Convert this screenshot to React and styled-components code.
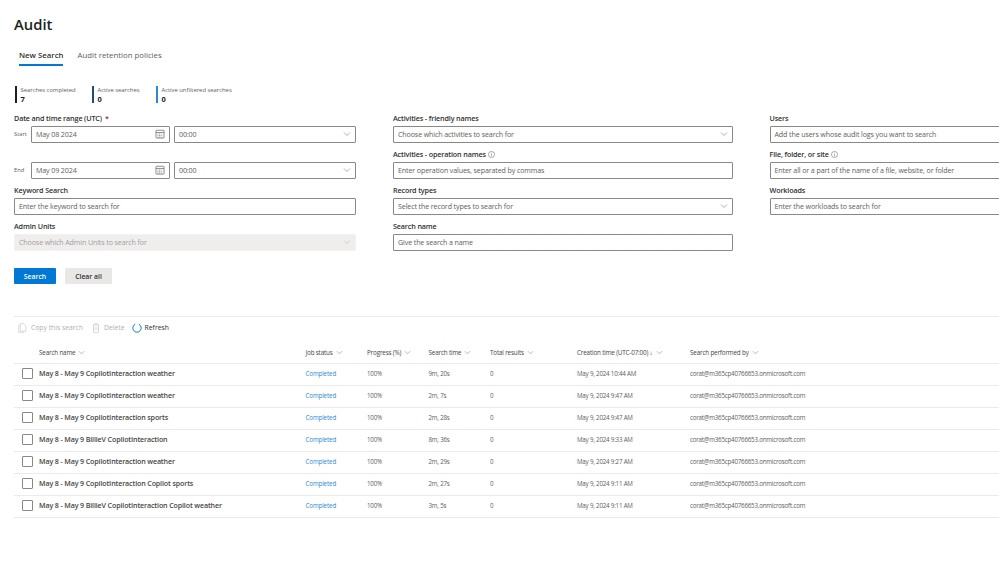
import React from 'react';
import styled, {createGlobalStyle} from 'styled-components';

const GlobalStyle = createGlobalStyle`
  html, body {
    margin: 0;
    width: 999px;
    height: 562px;
    overflow: hidden;
    background: #fff;
    font-family: "Open Sans", "Noto Sans", "Liberation Sans", sans-serif;
    color: #323130;
  }
`;

const Page = styled.div`
  width: 999px;
  height: 562px;
  overflow: hidden;
  padding: 14px 0 0 14px;
  box-sizing: border-box;
`;

const Title = styled.h1`
  margin: 0;
  height: 20px;
  font-size: 14.8px;
  line-height: 20px;
  font-weight: 600;
  color: #201f1e;
`;

const Tabs = styled.div`
  display: flex;
  gap: 14px;
  margin: 14px 0 0 5px;
`;

const Tab = styled.div`
  height: 16px;
  font-size: 7.8px;
  line-height: 14px;
  color: ${p => p.$active ? '#323130' : '#605e5c'};
  font-weight: ${p => p.$active ? 600 : 400};
  border-bottom: 2px solid ${p => p.$active ? '#0078d4' : 'transparent'};
`;

const Stats = styled.div`
  display: flex;
  margin: 20px 0 0 0.5px;
  height: 17px;
`;

const Stat = styled.div`
  width: ${p => p.$width}px;
  box-sizing: border-box;
  padding-left: 4px;
  border-left: 2px solid ${p => p.$color};
  display: flex;
  flex-direction: column;
`;

const StatLabel = styled.div`
  font-size: 5.9px;
  line-height: 8px;
  letter-spacing: -0.02px;
  color: #605e5c;
`;

const StatValue = styled.div`
  font-size: 7.5px;
  line-height: 10px;
  font-weight: 700;
  color: #201f1e;
`;

const FormGrid = styled.div`
  display: grid;
  grid-template-columns: 342px 339.5px 300px;
  column-gap: 37px;
  margin-top: 9px;
`;

const Column = styled.div`
  display: flex;
  flex-direction: column;
`;

const Field = styled.div`
  margin-bottom: 5px;
`;

const Label = styled.div`
  height: 14px;
  box-sizing: border-box;
  padding-bottom: 2px;
  display: flex;
  align-items: center;
  gap: 2px;
  font-size: 7.2px;
  letter-spacing: -0.14px;
  font-weight: 600;
  color: #323130;

  em {
    font-style: normal;
    color: #a4262c;
    margin-left: 1px;
  }
`;

const DateRow = styled.div`
  display: flex;
  align-items: center;
  margin-top: ${p => p.$top || 0}px;
  margin-bottom: ${p => p.$bottom || 0}px;
`;

const RowCaption = styled.div`
  width: 17px;
  box-sizing: border-box;
  padding-bottom: 2px;
  font-size: 5.8px;
  line-height: 10px;
  color: #605e5c;
`;

const Box = styled.div`
  height: 17px;
  box-sizing: border-box;
  display: flex;
  align-items: center;
  justify-content: space-between;
  padding: 0 4px 1px;
  border: 1px solid ${p => p.$disabled ? '#f3f2f1' : '#8a8886'};
  border-radius: 1px;
  background: ${p => p.$disabled ? '#efeeed' : '#fff'};
  color: ${p => p.$disabled ? '#a19f9d' : '#605e5c'};
  font-size: 7.1px;
  letter-spacing: -0.12px;
  white-space: nowrap;
  width: ${p => p.$width ? p.$width + 'px' : 'auto'};
  margin-left: ${p => p.$left || 0}px;
`;

const Buttons = styled.div`
  display: flex;
  gap: 9px;
  margin-top: 12px;
`;

const Button = styled.div`
  height: 16px;
  width: ${p => p.$width}px;
  display: flex;
  align-items: center;
  justify-content: center;
  font-size: 6.85px;
  font-weight: 600;
  background: ${p => p.$primary ? '#0078d4' : '#e9e8e7'};
  color: ${p => p.$primary ? '#fff' : '#323130'};
  border-radius: 1px;
`;

const Divider = styled.div`
  height: 1px;
  background: #edebe9;
  margin-top: 32px;
`;

const Toolbar = styled.div`
  display: flex;
  align-items: center;
  height: 21px;
  padding-left: 4px;
`;

const Action = styled.div`
  display: flex;
  align-items: center;
  gap: ${p => p.$gap || 4}px;
  margin-right: ${p => p.$right || 8}px;
  font-size: 6.8px;
  color: ${p => p.$disabled ? '#b3b0ad' : '#323130'};
`;

const Row = styled.div`
  display: grid;
  grid-template-columns: 25px 266.5px 61.5px 61.5px 61.5px 87px 113px 309px;
  align-items: center;
  height: 22px;
  box-sizing: border-box;
  padding-bottom: ${p => p.$head ? 0 : 2}px;
  margin-top: ${p => p.$head ? 4 : 0}px;
  border-bottom: 1px solid #edebe9;
`;

const HeadCell = styled.div`
  display: flex;
  align-items: center;
  gap: 3px;
  font-size: 6.3px;
  letter-spacing: -0.17px;
  font-weight: 500;
  color: #484644;
  white-space: nowrap;
`;

const Cell = styled.div`
  font-size: 6.2px;
  letter-spacing: -0.2px;
  color: #605e5c;
  white-space: nowrap;
`;

const NameCell = styled(Cell)`
  font-size: 7.1px;
  letter-spacing: -0.13px;
  font-weight: 600;
  color: #484644;
  padding-bottom: 1.5px;
`;

const StatusCell = styled(Cell)`
  color: #2b88d8;
  letter-spacing: -0.12px;
`;

const Check = styled.div`
  width: 9px;
  height: 9px;
  margin-left: 8px;
  border: 1px solid #8a8886;
  border-radius: 1px;
`;

const Chevron = ({size = 8, color = '#605e5c'}) => (
  <svg width={size} height={size} viewBox="0 0 16 16" fill="none" stroke={color} strokeWidth="1">
    <path d="M2 5l6 6 6-6"/>
  </svg>
);

const CalendarIcon = () => (
  <svg width="10" height="10" viewBox="0 0 16 16" fill="none" stroke="#605e5c" strokeWidth="1.1">
    <rect x="1.5" y="2" width="13" height="12.5" rx="1"/>
    <path d="M1.5 5.5h13"/>
    <path d="M4 8h8M4 10.5h8M4 13h8" strokeWidth="1" strokeDasharray="1.5 1"/>
  </svg>
);

const InfoIcon = () => (
  <svg width="7" height="7" viewBox="0 0 16 16" fill="none" stroke="#605e5c" strokeWidth="1.2">
    <circle cx="8" cy="8" r="7"/>
    <path d="M8 7v5M8 4v1.5"/>
  </svg>
);

const CopyIcon = () => (
  <svg width="9" height="10" viewBox="0 0 14 16" fill="none" stroke="#c8c6c4" strokeWidth="1">
    <path d="M1 3.5h2M1 3.5V15h8v-2"/>
    <path d="M3.5 1H9l3.5 3.5V13h-9z"/>
  </svg>
);

const TrashIcon = () => (
  <svg width="8" height="10" viewBox="0 0 12 16" fill="none" stroke="#c8c6c4" strokeWidth="1">
    <path d="M1 3h10M4 3V1h4v2M2 3v12h8V3M4.5 6v6M7.5 6v6"/>
  </svg>
);

const RefreshIcon = () => (
  <svg width="10" height="10" viewBox="0 0 16 16" fill="none" stroke="#0078d4" strokeWidth="1.5">
    <path d="M5.2 1.9A6.7 6.7 0 1 0 10.8 1.9"/>
  </svg>
);

const SelectBox = ({children, ...rest}) => (
  <Box {...rest}>
    <span>{children}</span>
    <Chevron color={rest.$disabled ? '#b3b0ad' : '#605e5c'}/>
  </Box>
);

const rows = [
  ['May 8 - May 9 CopilotInteraction weather', '9m, 20s', 'May 9, 2024 10:44 AM'],
  ['May 8 - May 9 CopilotInteraction weather', '2m, 7s', 'May 9, 2024 9:47 AM'],
  ['May 8 - May 9 CopilotInteraction sports', '2m, 28s', 'May 9, 2024 9:47 AM'],
  ['May 8 - May 9 BillieV CopilotInteraction', '8m, 36s', 'May 9, 2024 9:33 AM'],
  ['May 8 - May 9 CopilotInteraction weather', '2m, 29s', 'May 9, 2024 9:27 AM'],
  ['May 8 - May 9 CopilotInteraction Copilot sports', '2m, 27s', 'May 9, 2024 9:11 AM'],
  ['May 8 - May 9 BillieV CopilotInteraction Copilot weather', '3m, 5s', 'May 9, 2024 9:11 AM'],
];

const heads = ['Search name', 'Job status', 'Progress (%)', 'Search time', 'Total results'];

export default function App() {
  return (
    <Page>
      <GlobalStyle/>
      <Title>Audit</Title>
      <Tabs>
        <Tab $active>New Search</Tab>
        <Tab>Audit retention policies</Tab>
      </Tabs>

      <Stats>
        <Stat $width={77} $color="#201f1e">
          <StatLabel>Searches completed</StatLabel>
          <StatValue>7</StatValue>
        </Stat>
        <Stat $width={64} $color="#1f4e79">
          <StatLabel>Active searches</StatLabel>
          <StatValue>0</StatValue>
        </Stat>
        <Stat $width={100} $color="#2b88d8">
          <StatLabel>Active unfiltered searches</StatLabel>
          <StatValue>0</StatValue>
        </Stat>
      </Stats>

      <FormGrid>
        <Column>
          <Label>Date and time range (UTC) <em>*</em></Label>
          <DateRow>
            <RowCaption>Start</RowCaption>
            <Box $width={139}>May 08 2024 <CalendarIcon/></Box>
            <SelectBox $width={182} $left={4}>00:00</SelectBox>
          </DateRow>
          <DateRow $top={19} $bottom={5}>
            <RowCaption>End</RowCaption>
            <Box $width={139}>May 09 2024 <CalendarIcon/></Box>
            <SelectBox $width={182} $left={4}>00:00</SelectBox>
          </DateRow>
          <Field>
            <Label>Keyword Search</Label>
            <Box>Enter the keyword to search for</Box>
          </Field>
          <Field>
            <Label>Admin Units</Label>
            <SelectBox $disabled>Choose which Admin Units to search for</SelectBox>
          </Field>
          <Buttons>
            <Button $primary $width={42}>Search</Button>
            <Button $width={47}>Clear all</Button>
          </Buttons>
        </Column>

        <Column>
          <Field>
            <Label>Activities - friendly names</Label>
            <SelectBox>Choose which activities to search for</SelectBox>
          </Field>
          <Field>
            <Label>Activities - operation names <InfoIcon/></Label>
            <Box>Enter operation values, separated by commas</Box>
          </Field>
          <Field>
            <Label>Record types</Label>
            <SelectBox>Select the record types to search for</SelectBox>
          </Field>
          <Field>
            <Label>Search name</Label>
            <Box>Give the search a name</Box>
          </Field>
        </Column>

        <Column>
          <Field>
            <Label>Users</Label>
            <Box>Add the users whose audit logs you want to search</Box>
          </Field>
          <Field>
            <Label>File, folder, or site <InfoIcon/></Label>
            <Box>Enter all or a part of the name of a file, website, or folder</Box>
          </Field>
          <Field>
            <Label>Workloads</Label>
            <Box>Enter the workloads to search for</Box>
          </Field>
        </Column>
      </FormGrid>

      <Divider/>
      <Toolbar>
        <Action $disabled $right={9}><CopyIcon/> Copy this search</Action>
        <Action $disabled $right={7}><TrashIcon/> Delete</Action>
        <Action $gap={3}><RefreshIcon/> Refresh</Action>
      </Toolbar>

      <Row $head>
        <div/>
        {heads.map(h => <HeadCell key={h}>{h} <Chevron size={7}/></HeadCell>)}
        <HeadCell>Creation time (UTC-07:00) ↓ <Chevron size={7}/></HeadCell>
        <HeadCell>Search performed by <Chevron size={7}/></HeadCell>
      </Row>
      {rows.map(([name, time, created], i) => (
        <Row key={i}>
          <Check/>
          <NameCell>{name}</NameCell>
          <StatusCell>Completed</StatusCell>
          <Cell>100%</Cell>
          <Cell>{time}</Cell>
          <Cell>0</Cell>
          <Cell>{created}</Cell>
          <Cell>corat@m365cp40766653.onmicrosoft.com</Cell>
        </Row>
      ))}
    </Page>
  );
}
